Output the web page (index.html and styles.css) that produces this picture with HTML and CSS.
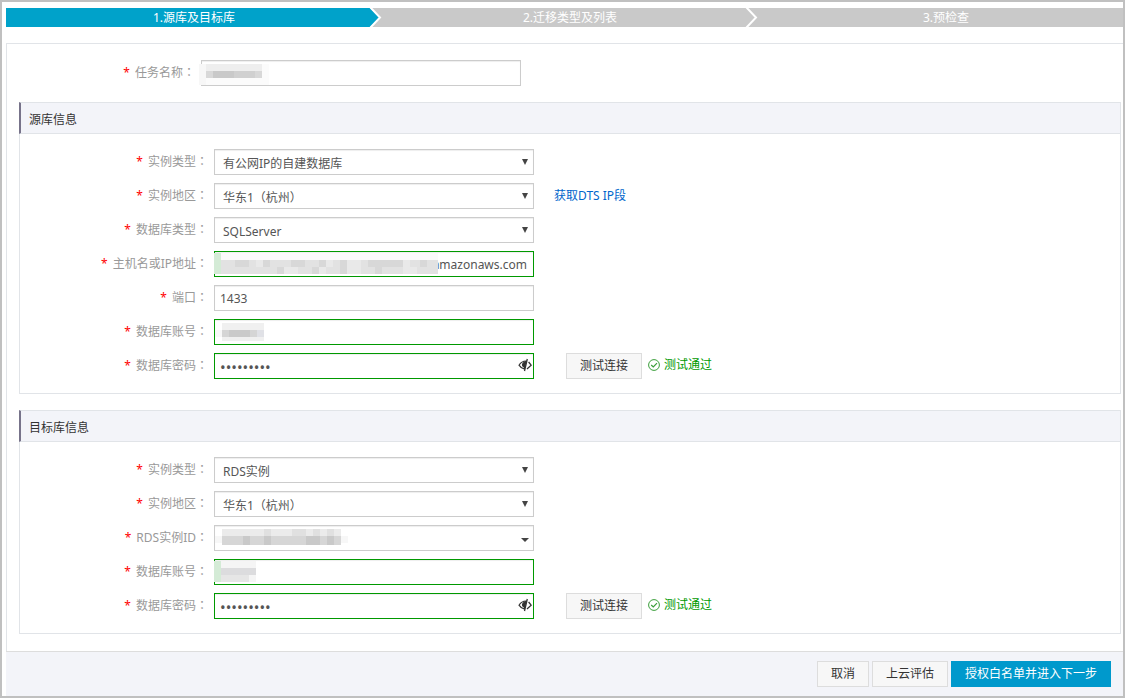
FILE: index.html
```html
<!DOCTYPE html>
<html lang="zh-CN">
<head>
<meta charset="utf-8">
<title>创建迁移任务</title>
<link rel="stylesheet" href="styles.css">
</head>
<body>
<svg class="defs" aria-hidden="true">
  <symbol id="eye" viewBox="0 0 14 14">
    <path d="M1 7.2Q3.5 3.2 8 3L6.2 11Q3 10.300 1 7.200Z" fill="none" stroke="#333" stroke-width="1.200"/>
    <path d="M8.500 3L6.500 9.500Q3.800 9.200 4 6.500Q4.300 3.500 8.500 3Z" fill="#333"/>
    <path d="M9.300 1L6.500 13M10.600 4L13.200 7.200L9 11" fill="none" stroke="#333" stroke-width="1.300"/>
  </symbol>
  <symbol id="ok" viewBox="0 0 12 12">
    <circle cx="6" cy="6" r="5.400" fill="none" stroke="#3a9e3a"/>
    <path d="M3.200 6L5.300 8L9 4.200" fill="none" stroke="#3a9e3a" stroke-width="1.200"/>
  </symbol>
</svg>
<ol class="steps">
  <li class="step step-on">1.源库及目标库<svg class="chevron" viewBox="0 0 13 19"><path d="M0 0H1L10 9.500L1 19H0Z" fill="#00a2ca"/><path d="M1 -1L11 9.500L1 20" fill="none" stroke="#fff" stroke-width="2"/></svg></li>
  <li class="step">2.迁移类型及列表<svg class="chevron" viewBox="0 0 13 19"><path d="M1 -1L11 9.500L1 20" fill="none" stroke="#fff" stroke-width="2"/></svg></li>
  <li class="step">3.预检查</li>
</ol>
<form class="form">
  <main class="panel">
    <div class="row">
      <label class="label label-task" for="task"><i class="req">*</i>任务名称<span class="colon" lang="zh-TW">：</span></label>
      <div class="control"><input class="field" id="task" type="text">
        <svg class="mask mask-edge" width="70" height="21" shape-rendering="crispEdges"><path fill="#f7f7f7" d="M0 0h70v21H0z"/><path fill="#eee" d="M7 0h56v7H7z"/><path fill="#d8d8d8" d="M7 7h7v7H7zM56 7h7v7h-7z"/><path fill="#c9c9c9" d="M14 7h21v7H14z"/><path fill="#d0d0d0" d="M35 7h21v7H35z"/><path fill="#fbfbfb" d="M63 0h7v21h-7zM7 14h56v7H7z"/></svg>
      </div>
    </div>
    <section class="section">
      <h2 class="title">源库信息</h2>
      <div class="rows">
        <div class="row">
          <label class="label" for="s-type"><i class="req">*</i>实例类型<span class="colon" lang="zh-TW">：</span></label>
          <div class="control"><select class="field" id="s-type"><option>有公网IP的自建数据库</option></select><svg class="arrow" viewBox="0 0 6 6"><path d="M0 0H6L3 6Z" fill="#444"/></svg></div>
        </div>
        <div class="row">
          <label class="label" for="s-region"><i class="req">*</i>实例地区<span class="colon" lang="zh-TW">：</span></label>
          <div class="control"><select class="field region" id="s-region" lang="zh-TW"><option>华东1（杭州）</option></select><svg class="arrow" viewBox="0 0 6 6"><path d="M0 0H6L3 6Z" fill="#444"/></svg></div>
          <a class="link" href="#">获取DTS IP段</a>
        </div>
        <div class="row">
          <label class="label" for="s-db"><i class="req">*</i>数据库类型<span class="colon" lang="zh-TW">：</span></label>
          <div class="control"><select class="field" id="s-db"><option>SQLServer</option></select><svg class="arrow" viewBox="0 0 6 6"><path d="M0 0H6L3 6Z" fill="#444"/></svg></div>
        </div>
        <div class="row">
          <label class="label" for="s-host"><i class="req">*</i>主机名或IP地址<span class="colon" lang="zh-TW">：</span></label>
          <div class="control"><input class="field valid host" id="s-host" type="text" value="amazonaws.com">
            <svg class="mask mask-host" width="224" height="21" shape-rendering="crispEdges"><path fill="#fafafa" d="M0 0h227v7H0z"/><path fill="#e2e2e2" d="M7 7h220v14H7z"/><path fill="#d4ebd6" d="M0 0h7v21H0z"/><path fill="#d8d8d8" d="M21 7h14v7H21zM49 7h7v7h-7zM77 7h14v7H77zM105 7h7v7h-7zM126 7h7v7h-7zM154 7h35v7h-35zM63 14h7v7h-7zM98 14h7v7h-7zM126 14h7v7h-7zM161 14h7v7h-7zM206 7h7v7h-7z"/><path fill="#e9e9e9" d="M42 7h7v7h-7zM112 7h7v7h-7zM133 7h14v7h-14zM189 7h7v7h-7zM70 14h14v7H70zM105 14h7v7h-7zM133 14h14v7h-14zM189 14h14v7h-14z"/></svg>
          </div>
        </div>
        <div class="row">
          <label class="label" for="s-port"><i class="req">*</i>端口<span class="colon" lang="zh-TW">：</span></label>
          <div class="control"><input class="field" id="s-port" type="text" value="1433"></div>
        </div>
        <div class="row">
          <label class="label" for="s-user"><i class="req">*</i>数据库账号<span class="colon" lang="zh-TW">：</span></label>
          <div class="control"><input class="field valid" id="s-user" type="text">
            <svg class="mask" width="49" height="18" shape-rendering="crispEdges"><path fill="#f0f0f0" d="M7 0h42v18H7z"/><path fill="#f8f8f8" d="M0 7h7v7H0z"/><path fill="#d5d5d5" d="M7 7h7v7H7zM35 7h7v7h-7z"/><path fill="#cacaca" d="M14 7h21v7H14z"/><path fill="#e0e1e6" d="M42 7h7v7h-7z"/></svg>
          </div>
        </div>
        <div class="row">
          <label class="label" for="s-pass"><i class="req">*</i>数据库密码<span class="colon" lang="zh-TW">：</span></label>
          <div class="control"><input class="field valid pass" id="s-pass" type="password" value="123456789"><svg class="eye"><use href="#eye"/></svg></div>
          <button class="button test" type="button">测试连接</button>
          <span class="status"><svg class="ok"><use href="#ok"/></svg>测试通过</span>
        </div>
      </div>
    </section>
    <section class="section">
      <h2 class="title">目标库信息</h2>
      <div class="rows">
        <div class="row">
          <label class="label" for="t-type"><i class="req">*</i>实例类型<span class="colon" lang="zh-TW">：</span></label>
          <div class="control"><select class="field" id="t-type"><option>RDS实例</option></select><svg class="arrow" viewBox="0 0 6 6"><path d="M0 0H6L3 6Z" fill="#444"/></svg></div>
        </div>
        <div class="row">
          <label class="label" for="t-region"><i class="req">*</i>实例地区<span class="colon" lang="zh-TW">：</span></label>
          <div class="control"><select class="field region" id="t-region" lang="zh-TW"><option>华东1（杭州）</option></select><svg class="arrow" viewBox="0 0 6 6"><path d="M0 0H6L3 6Z" fill="#444"/></svg></div>
        </div>
        <div class="row">
          <label class="label" for="t-id"><i class="req">*</i>RDS实例ID<span class="colon" lang="zh-TW">：</span></label>
          <div class="control"><select class="field" id="t-id"><option></option></select><svg class="arrow arrow-low" viewBox="0 0 8 4"><path d="M0 0H8L4 4Z" fill="#444"/></svg>
            <svg class="mask" width="133" height="16" shape-rendering="crispEdges"><path fill="#f7f7f7" d="M0 7h133v7H0z"/><path fill="#ebebeb" d="M7 0h119v7H7z"/><path fill="#e0e0e0" d="M49 0h7v7h-7zM77 0h14v7H77zM98 0h7v7h-7zM112 0h7v7h-7z"/><path fill="#d6d6d6" d="M7 7h119v9H7z"/><path fill="#c9c9c9" d="M28 7h7v9h-7zM49 7h7v9h-7zM91 7h14v9H91zM112 7h7v9h-7z"/></svg>
          </div>
        </div>
        <div class="row">
          <label class="label" for="t-user"><i class="req">*</i>数据库账号<span class="colon" lang="zh-TW">：</span></label>
          <div class="control"><input class="field valid" id="t-user" type="text">
            <svg class="mask mask-host" width="42" height="21" shape-rendering="crispEdges"><path fill="#f5f5f5" d="M7 0h35v21H7z"/><path fill="#dcdcde" d="M7 7h35v7H7z"/><path fill="#e6e6e6" d="M7 14h28v7H7z"/><path fill="#d4ebd6" d="M0 0h7v21H0z"/></svg>
          </div>
        </div>
        <div class="row">
          <label class="label" for="t-pass"><i class="req">*</i>数据库密码<span class="colon" lang="zh-TW">：</span></label>
          <div class="control"><input class="field valid pass" id="t-pass" type="password" value="123456789"><svg class="eye"><use href="#eye"/></svg></div>
          <button class="button test" type="button">测试连接</button>
          <span class="status"><svg class="ok"><use href="#ok"/></svg>测试通过</span>
        </div>
      </div>
    </section>
  </main>
  <footer class="footer">
    <button class="button" type="button">取消</button>
    <button class="button" type="button">上云评估</button>
    <button class="button primary" type="submit">授权白名单并进入下一步</button>
  </footer>
</form>
</body>
</html>
```
FILE: styles.css
```css
* { box-sizing: border-box; }
body {
  margin: 0;
  min-height: 100vh;
  display: flex;
  flex-direction: column;
  padding: 6px 0 0 4px;
  border: 2px solid #c0c0c0;
  background: #fff;
  color: #333;
  font: 12px/20px "Noto Sans", "Noto Sans CJK SC", sans-serif;
}
input, select, button { font: inherit; color: inherit; }
.defs { position: absolute; width: 0; height: 0; }

.steps {
  display: flex;
  margin: 0;
  padding: 0;
  list-style: none;
  overflow: hidden;
}
.step {
  position: relative;
  flex: 1;
  height: 19px;
  line-height: 19px;
  text-align: center;
  color: #fff;
  background: #c9c9c9;
}
.step:last-child { margin-right: -11px; }
.step-on { background: linear-gradient(to left, #c9c9c9 13px, #00a2ca 13px); }
.chevron { position: absolute; right: 0; top: 0; width: 13px; height: 19px; }

.form { flex: 1; display: flex; flex-direction: column; margin-top: 16px; }
.panel {
  flex: 1;
  padding: 16px 2px 16px 12px;
  border: 1px solid #e1e4e8;
  border-width: 1px 0 0 1px;
}
.section { margin-top: 16px; border: 1px solid #e1e4e8; }
.title {
  margin: -1px 0 0 -1px;
  padding: 7px 8px 3px;
  border: 1px solid #e1e4e8;
  border-width: 1px 0 1px 2px;
  border-left-color: #77738a;
  background: #f3f4f9;
  font-size: 12px;
  font-weight: 400;
}
.rows { display: flex; flex-direction: column; gap: 8px; padding: 15px 0 14px; }
.row { display: flex; align-items: flex-start; }
.label { width: 188px; margin-right: 6px; text-align: right; line-height: 24px; color: #999; }
.label-task { width: 176px; }
.colon { font-family: "Noto Sans CJK TC", sans-serif; }
.req { margin-right: 5px; font-style: normal; color: #f00; }

.control { position: relative; flex: 0 1 320px; }
.field {
  display: block;
  width: 100%;
  height: 26px;
  padding: 1px 5px 0;
  border: 1px solid #ccc;
  border-radius: 0;
  outline: 0;
  background: #fff;
  box-shadow: inset 0 1px 1px #eee;
  color: #555;
}
select.field { appearance: none; padding: 3px 8px 0; }
.region { font-family: "Noto Sans", "Noto Sans CJK TC", sans-serif; }
.valid { border-color: #090; }
.host { padding-right: 6px; text-align: right; }
.pass { font-size: 15px; }
.arrow { position: absolute; right: 6px; top: 10px; width: 6px; height: 6px; }
.arrow-low { top: 13px; right: 5px; width: 8px; height: 4px; }
.eye { position: absolute; right: 2px; top: 5px; width: 14px; height: 14px; }
.mask { position: absolute; left: 1px; top: 4px; }
.mask-host { left: 0; top: 2px; }
.mask-edge { left: -2px; top: 4px; }

.link { margin-left: 20px; line-height: 26px; color: #06c; text-decoration: none; }
.button {
  height: 26px;
  padding: 0 13px;
  border: 1px solid #ddd;
  background: #f7f7f7;
}
.test { margin-left: 32px; }
.status { display: flex; align-items: center; gap: 4px; margin-left: 6px; line-height: 24px; color: #090; }
.ok { width: 12px; height: 12px; }

.footer {
  display: flex;
  justify-content: flex-end;
  gap: 3px;
  padding: 9px 12px;
  border-top: 1px solid #ddd;
  background: #f3f4f9;
}
.primary { border-color: #09c; background: #09c; color: #fff; }
```
